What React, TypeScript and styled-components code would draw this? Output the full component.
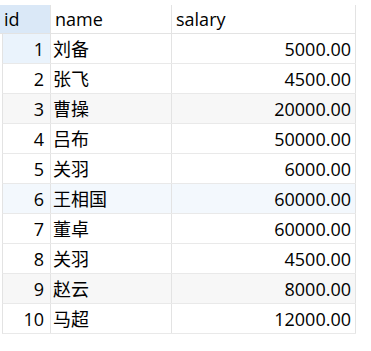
import React from 'react'
import styled, { createGlobalStyle } from 'styled-components'

type Row = { id: number; name: string; salary: string }

const rows: Row[] = [
    { id: 1, name: '刘备', salary: '5000.00' },
    { id: 2, name: '张飞', salary: '4500.00' },
    { id: 3, name: '曹操', salary: '20000.00' },
    { id: 4, name: '吕布', salary: '50000.00' },
    { id: 5, name: '关羽', salary: '6000.00' },
    { id: 6, name: '王相国', salary: '60000.00' },
    { id: 7, name: '董卓', salary: '60000.00' },
    { id: 8, name: '关羽', salary: '4500.00' },
    { id: 9, name: '赵云', salary: '8000.00' },
    { id: 10, name: '马超', salary: '12000.00' }
]

// row 6 is the hovered one, 3 and 9 carry the grey stripe
const rowTone = (id: number) => (id === 6 ? 'hover' : id % 3 === 0 ? 'stripe' : 'plain')

const GlobalStyle = createGlobalStyle`
    body {
        margin: 0;
        background: #ffffff;
        font-family: "Open Sans", "Noto Sans CJK SC", sans-serif;
        color: #000000;
    }
`

const Grid = styled.div`
    width: 356px;
    padding-top: 5px;
    font-size: 18px;
`

const HeaderRow = styled.div`
    display: flex;
    height: 28px;
    border-bottom: 1px solid #e3e3e3;
`

const HeadCell = styled.div<{ $w: number; $active?: boolean }>`
    width: ${p => p.$w}px;
    box-sizing: border-box;
    display: flex;
    align-items: center;
    padding-left: 4px;
    border-right: 1px solid #e3e3e3;
    background: ${p => (p.$active ? '#dae8f7' : 'transparent')};
    line-height: 1;
`

const BodyRow = styled.div<{ $tone: string }>`
    display: flex;
    height: 29px;
    margin-left: 2px;
    border-left: 1px solid #e3e3e3;
    border-bottom: 1px solid #e9e9e9;
    background: ${p => (p.$tone === 'hover' ? '#f3f8fd' : p.$tone === 'stripe' ? '#f7f7f7' : '#ffffff')};
`

const Cell = styled.div<{ $w: number; $right?: boolean; $focus?: boolean; $pad?: number }>`
    width: ${p => p.$w}px;
    box-sizing: border-box;
    display: flex;
    align-items: center;
    justify-content: ${p => (p.$right ? 'flex-end' : 'flex-start')};
    padding: ${p => (p.$right ? `0 ${p.$pad ?? 4}px 0 0` : '0 0 0 2px')};
    border-right: 1px solid #e3e3e3;
    background: ${p => (p.$focus ? '#eaf3fc' : 'transparent')};
    white-space: nowrap;
    line-height: 1;
`

export default function App() {
    return (
        <>
            <GlobalStyle />
            <Grid>
                <HeaderRow>
                    <HeadCell $w={51} $active>id</HeadCell>
                    <HeadCell $w={121}>name</HeadCell>
                    <HeadCell $w={184}>salary</HeadCell>
                </HeaderRow>
                {rows.map(r => (
                    <BodyRow key={r.id} $tone={rowTone(r.id)}>
                        <Cell $w={48} $right $pad={6} $focus={r.id === 1}>{r.id}</Cell>
                        <Cell $w={121}>{r.name}</Cell>
                        <Cell $w={184} $right>{r.salary}</Cell>
                    </BodyRow>
                ))}
            </Grid>
        </>
    )
}
